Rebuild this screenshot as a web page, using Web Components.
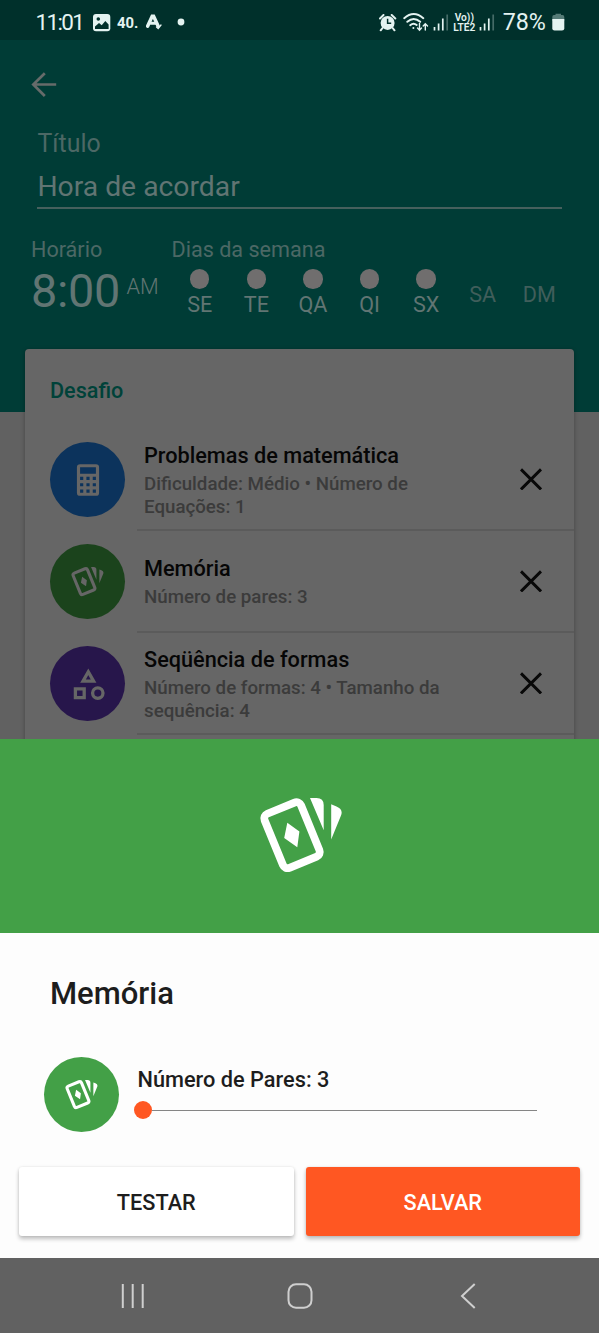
<!DOCTYPE html>
<html lang="pt-BR">
<head>
<meta charset="utf-8">
<title>Hora de acordar</title>
<style>
body{margin:0;width:599px;height:1333px;overflow:hidden;font-family:Roboto,"Liberation Sans",sans-serif}
</style>
</head>
<body>
<alarm-screen></alarm-screen>
<script>
const define=(name,html)=>customElements.define(name,class extends HTMLElement{
  constructor(){super();this.attachShadow({mode:'open'});}
  connectedCallback(){
    const t=document.createElement('template');
    t.innerHTML=typeof html==='function'?html(this):html;
    this.shadowRoot.replaceChildren(t.content.cloneNode(true));
  }
});

const ICONS={
  cards:`<svg width="33" height="31" viewBox="259 796 84 78" fill="currentColor"><rect x="272.3" y="806" width="39.4" height="58.4" rx="5" fill="none" stroke="currentColor" stroke-width="7.8" transform="rotate(-22.3 292 835.2)"/><path d="M287.3 822.7 299.4 831.6 297.3 847.3 284.2 838zM310 798H316.5Q323.7 798 323.7 805V830.3zM331.2 804.3 336.5 806.5Q343.5 809.5 341 815.5L331.2 839.6z"/></svg>`,
  calc:`<svg width="38" height="38" viewBox="0 0 24 24" fill="currentColor"><path d="M7,2H17A2,2 0 0,1 19,4V20A2,2 0 0,1 17,22H7A2,2 0 0,1 5,20V4A2,2 0 0,1 7,2M7,4V8H17V4H7M7,10V12H9V10H7M11,10V12H13V10H11M15,10V12H17V10H15M7,14V16H9V14H7M11,14V16H13V14H11M15,14V16H17V14H15M7,18V20H9V18H7M11,18V20H13V18H11M15,18V20H17V18H15Z"/></svg>`,
  shapes:`<svg width="38" height="38" viewBox="0 0 38 38" fill="none" stroke="currentColor" stroke-width="3.3"><path d="M19.3 6.8 24.6 16.2H14zM6.4 23.9H15.2V32.7H6.4z"/><circle cx="28.8" cy="28.1" r="5.2"/></svg>`
};

define('round-icon',el=>`<style>
:host{display:flex;flex:none;width:75px;height:75px;border-radius:50%;align-items:center;justify-content:center;background:var(--disc);color:var(--glyph,#fff)}
svg{display:block}</style>${ICONS[el.getAttribute('kind')]}`);

define('status-bar',`<style>
:host{display:flex;height:40px;background:#00302b;color:#e4f3f1;align-items:flex-start;box-sizing:border-box;padding-left:35.5px}
span{line-height:26px;font-size:22.5px;white-space:nowrap;margin-top:9px}
svg{display:block;flex:none}
.clock{width:57.5px;letter-spacing:-1.65px}
.deg{font-size:14.8px;font-weight:700;width:29px;margin-top:10px}
.gap{flex:1}
.pct{font-size:23.3px;width:48px;letter-spacing:-.1px}
.lte{display:flex;flex-direction:column;width:25px;margin:13px 2px 0 0;align-items:center}
.lte span{font-size:10.2px;line-height:10px;font-weight:600;margin:0}
</style>
<span class="clock">11:01</span>
<svg width="18" height="18" viewBox="0 0 18 18" style="margin:14px 6px 0 0"><rect x="0" y="0" width="17.3" height="17.3" rx="3" fill="#e4f3f1"/><circle cx="5.3" cy="5" r="1.8" fill="#00302b"/><path d="M2 15V12.5L6 9 8.7 11.3 12.3 7 15.6 10.6V15z" fill="#00302b"/></svg>
<span class="deg">40.</span>
<svg width="18" height="17" viewBox="0 0 18 17" style="margin-top:14px" fill="none" stroke="#e4f3f1" stroke-linecap="round"><path d="M1.6 12.2 6.2 2.3H7.6L12.2 12.2" stroke-width="3.5"/><path d="M5 9.3H10" stroke-width="3"/><path d="M10.5 13 12.2 14.6 15 11" stroke-width="1.3"/></svg>
<svg width="8" height="8" style="margin:18px 0 0 12.5px"><circle cx="4" cy="4" r="3.4" fill="#e4f3f1"/></svg>
<div class="gap"></div>
<svg width="18" height="18" viewBox="0 0 18 18" style="margin:14px 6px 0 0"><path d="M3.5 14 1.7 16.3M13.7 14 15.5 16.3M1 4.5 4.5 1M16.3 4.5 12.7 1" stroke="#e4f3f1" stroke-width="2" stroke-linecap="round"/><circle cx="8.6" cy="8.9" r="7" fill="#e4f3f1"/><path d="M8.6 4.8V9.2H12.2" fill="none" stroke="#00302b" stroke-width="1.5"/></svg>
<svg width="26" height="19" viewBox="0 0 26 19" style="margin:13px 4px 0 0" fill="none" stroke="#e4f3f1" stroke-width="1.9" stroke-linecap="round"><path d="M1.2 5.2Q10.7-3 20.3 5.2M4.3 8.8Q10.7 3 17.2 8.8M7.2 12.2Q10.5 9.3 13.7 12"/><circle cx="10.4" cy="15" r="1" fill="#e4f3f1" stroke="none"/><path d="M16.5 10.5V17M14.5 15 16.5 17.2 18.5 15M22.3 17V10.8M20.2 13 22.3 10.7 24.5 13" stroke-width="1.4"/></svg>
<svg width="17" height="17" viewBox="0 0 17 17" style="margin:14px 2px 0 0" stroke="#e4f3f1" stroke-width="1.7"><path d="M1.5 13V16.5M5.6 9.5V16.5M9.8 4.5V16.5"/><path d="M14.2 .5V16.5" opacity=".3"/></svg>
<div class="lte"><span>Vo))</span><span>LTE2</span></div>
<svg width="17" height="17" viewBox="0 0 17 17" style="margin:14px 7px 0 0" stroke="#e4f3f1" stroke-width="1.7"><path d="M1.5 13V16.5M5.6 9.5V16.5M9.8 4.5V16.5"/><path d="M14.2 .5V16.5" opacity=".3"/></svg>
<span class="pct">78%</span>
<svg width="13" height="18" viewBox="0 0 13 18" style="margin:13px 34.5px 0 .7px"><path d="M3.5 2V.8H9V2H10.5Q12.3 2 12.3 4V8H.3V4Q.3 2 2 2z" fill="#557b77"/><path d="M.3 6H12.3V15.5Q12.3 17.5 10 17.5H2.5Q.3 17.5 .3 15.5z" fill="#e4f3f1"/></svg>`);

define('week-day',`<style>
:host{display:flex;flex:none;flex-direction:column;width:56.6px;height:50px;align-items:center;justify-content:center;color:#617573}
:host([off]){color:#405e5b}
i{width:19.4px;height:19.4px;border-radius:50%;background:#706e6e;margin:-1px 0 2px}
:host([off]) i{display:none}
span{font-size:21.6px;line-height:27px}</style><i></i><span><slot></slot></span>`);

define('alarm-header',`<style>
:host{display:block;height:372px;background:#003c36;box-sizing:border-box;padding:32px 37px 0 31px}
.back{display:block;margin-bottom:32px}
.label{font-size:24.9px;line-height:30px;color:#4c6865;padding-left:6.5px;margin-top:-1px}
.input{font-size:28.3px;line-height:34px;color:#617573;margin:11px 0 0 6.4px;height:37px;border-bottom:2px solid #46605d}
.cols{display:flex;margin-top:27px;color:#4c6865}
.time{flex:none;width:140.5px;font-size:21.6px;line-height:28px}
.clock{display:flex;color:#617573}
.clock b{font:400 46.8px/54px Roboto;width:95.5px;letter-spacing:-.35px}
.clock span{font-weight:300;line-height:45px}
.days{font-size:21.6px;line-height:28px;width:390px;flex:none}
.row{display:flex;margin-top:5px}
</style>
<svg class="back" width="26" height="26" viewBox="0 0 26 26" fill="none" stroke="#666b6a" stroke-width="2.7"><path d="M25.2 12.5H2.5M13.8 1.2 2.3 12.5 13.8 24"/></svg>
<div class="label">Título</div><div class="input">Hora de acordar</div>
<div class="cols"><div class="time">Horário<div class="clock"><b>8:00</b><span>AM</span></div></div>
<div class="days">Dias da semana<div class="row"><week-day>SE</week-day><week-day>TE</week-day><week-day>QA</week-day><week-day>QI</week-day><week-day>SX</week-day><week-day off>SA</week-day><week-day off>DM</week-day></div></div></div>`);

define('challenge-row',el=>`<style>
:host{display:flex;height:102.1px;align-items:center;padding-left:25px;--glyph:#666}
.body{flex:1;display:flex;height:100%;box-sizing:border-box;margin-left:12px;padding:1px 32px 0 7px;border-bottom:2px solid #5b5b5b;align-items:center;justify-content:space-between}
.title{font-size:21.7px;line-height:26px;font-weight:500;color:#060606;white-space:nowrap;padding-top:3px}
.sub{font-size:18.72px;line-height:22.4px;font-weight:500;color:#3b3b3b;margin-top:4px;width:310px}
</style><round-icon kind="${el.getAttribute('kind')}"></round-icon>
<div class="body"><div><div class="title"><slot name="title"></slot></div><div class="sub"><slot></slot></div></div>
<svg width="22" height="22" viewBox="0 0 22 22" stroke="#080808" stroke-width="2.9"><path d="M1 1.4 21 21.4M21 1.4 1 21.4"/></svg></div>`);

define('challenge-card',`<style>
:host{display:block;height:400px;margin:-63px 25px 0;background:#666;border-radius:4px 4px 0 0;box-shadow:0 1px 4px rgba(0,0,0,.3);position:relative}
h2{margin:0;padding:28px 0 0 25px;height:51.5px;font-size:21.6px;line-height:28px;font-weight:500;color:#004239}
</style><h2>Desafio</h2><slot></slot>`);

define('flat-button',`<style>
:host{display:flex;flex:1;height:69.5px;border-radius:3px;align-items:center;justify-content:center;font-size:21.7px;font-weight:500;background:var(--bg,#fff);color:var(--fg,#1d1d1d);box-shadow:0 3px 4px rgba(0,0,0,.24),0 0 3px rgba(0,0,0,.1)}
span{line-height:26px;padding-top:3px}</style><span><slot></slot></span>`);

define('pairs-slider',`<style>
:host{display:flex;align-items:center;height:18px;width:403px}
i{width:18px;height:18px;border-radius:50%;background:#ff5722}
b{flex:1;height:1px;background:#858585}</style><i></i><b></b>`);

define('challenge-sheet',`<style>
:host{display:block;position:absolute;left:0;top:739px;width:599px;height:519px;background:#fdfdfd;color:#1d1d1d}
.hero{height:194px;background:#43a047;color:#fff;display:flex;align-items:center;justify-content:center}
.hero svg{width:84px;height:78px;margin:0 0 3px 2px}
h1{margin:0;padding:42px 0 0 50px;font-size:31px;line-height:38px;font-weight:500}
.set{display:flex;padding:44px 0 0 44px;--disc:#43a047}
.control{margin-left:15px}
.name{font-size:21.75px;font-weight:500;line-height:28px;margin:9px 0 7px 3.5px}
.buttons{display:flex;gap:12px;padding:34.5px 19px 0}
</style><div class="hero">${ICONS.cards}</div><h1>Memória</h1>
<div class="set"><round-icon kind="cards"></round-icon><div class="control"><div class="name">Número de Pares: 3</div><pairs-slider></pairs-slider></div></div>
<div class="buttons"><flat-button>TESTAR</flat-button><flat-button style="--bg:#ff5722;--fg:#fff">SALVAR</flat-button></div>`);

define('nav-bar',`<style>
:host{position:absolute;left:0;top:1258px;width:599px;height:75px;background:#616161;display:flex;align-items:center;box-sizing:border-box;padding-left:120px}
svg{fill:none;stroke:#cfcfcf;stroke-width:2}
</style><svg width="26" height="26"><path d="M2.8 1V25M12.7 1V25M22.7 1V25"/></svg>
<svg width="26" height="26" style="margin-left:140.5px"><rect x="1.5" y="1.3" width="23" height="23.4" rx="7.5"/></svg>
<svg width="18" height="26" style="margin-left:146.5px"><path d="M15.7 1 3 13 15.7 25"/></svg>`);

define('alarm-screen',`<style>
:host{display:block;position:relative;width:599px;height:1333px;background:#616161;overflow:hidden}
</style><status-bar></status-bar><alarm-header></alarm-header>
<challenge-card>
<challenge-row kind="calc" style="--disc:#0c335c"><span slot="title">Problemas de matemática</span>Dificuldade: Médio • Número de Equações: 1</challenge-row>
<challenge-row kind="cards" style="--disc:#1b431c"><span slot="title">Memória</span>Número de pares: 3</challenge-row>
<challenge-row kind="shapes" style="--disc:#27164b"><span slot="title">Seqüência de formas</span>Número de formas: 4 • Tamanho da sequência: 4</challenge-row>
</challenge-card>
<challenge-sheet></challenge-sheet><nav-bar></nav-bar>`);
</script>
</body>
</html>
